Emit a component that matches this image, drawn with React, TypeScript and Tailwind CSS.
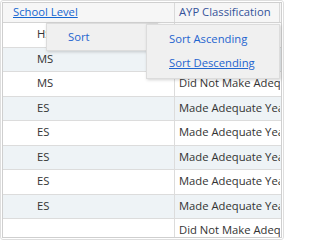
const rows = [
  { level: "HS", ayp: "Made Adequate Yearly Progress" },
  { level: "MS", ayp: "Did Not Make Adequate Yearly Progress" },
  { level: "MS", ayp: "Did Not Make Adequate Yearly Progress" },
  { level: "ES", ayp: "Made Adequate Yearly Progress" },
  { level: "ES", ayp: "Made Adequate Yearly Progress" },
  { level: "ES", ayp: "Made Adequate Yearly Progress" },
  { level: "ES", ayp: "Made Adequate Yearly Progress" },
  { level: "ES", ayp: "Made Adequate Yearly Progress" },
  { level: "", ayp: "Did Not Make Adequate Yearly Progress" },
];

export default function App() {
  return (
    <div className="h-[240px] w-[284px] overflow-hidden bg-white font-['Open_Sans',sans-serif] text-[11.25px]">
      <div className="relative h-full w-full overflow-hidden rounded-[3px] border border-[#dedede] p-px">
        <div className="h-full w-full overflow-hidden border border-[#cfcfcf] bg-white">
          <div className="flex h-[20px] border-b border-[#d4d4d4] bg-[#f6f6f6]">
            <div className="flex w-[172px] shrink-0 items-center border-r border-[#d9d9d9] pl-[10px]">
              <span className="text-[#1566d1] underline">School Level</span>
            </div>
            <div className="flex w-[105px] shrink-0 items-center border-r border-[#d9d9d9] pl-[4px] text-[#35539a]">
              AYP Classification
            </div>
          </div>
          {rows.map((r, i) => (
            <div
              key={i}
              className={`flex h-[24.5px] border-b border-[#dcdcdc] text-[#333] ${
                i % 2 === 1 ? "bg-[#eef3f6]" : "bg-white"
              }`}
            >
              <div className="flex w-[172px] shrink-0 items-center border-r border-[#dcdcdc] pl-[34px]">
                {r.level}
              </div>
              <div className="w-[105px] shrink-0 overflow-hidden">
                <div className="flex h-full items-center whitespace-nowrap pl-[4px]">{r.ayp}</div>
              </div>
            </div>
          ))}
        </div>

        <div className="absolute left-[45px] top-[22px] h-[28px] w-[112px] border border-[#dcdcdc] bg-[#f0f0f0] shadow-[1px_1px_3px_rgba(0,0,0,0.18)]">
          <div className="flex h-full items-center pl-[21px] text-[#1f64cf]">Sort</div>
        </div>

        <div className="absolute left-[145px] top-[23px] flex h-[55px] w-[134px] flex-col justify-center border border-[#dcdcdc] bg-[#f0f0f0] shadow-[1px_1px_3px_rgba(0,0,0,0.18)]">
          <div className="flex h-[24px] items-center pl-[22px] text-[#1f64cf]">Sort Ascending</div>
          <div className="flex h-[24px] items-center pl-[22px] text-[#1f64cf] underline">Sort Descending</div>
        </div>
      </div>
    </div>
  );
}
